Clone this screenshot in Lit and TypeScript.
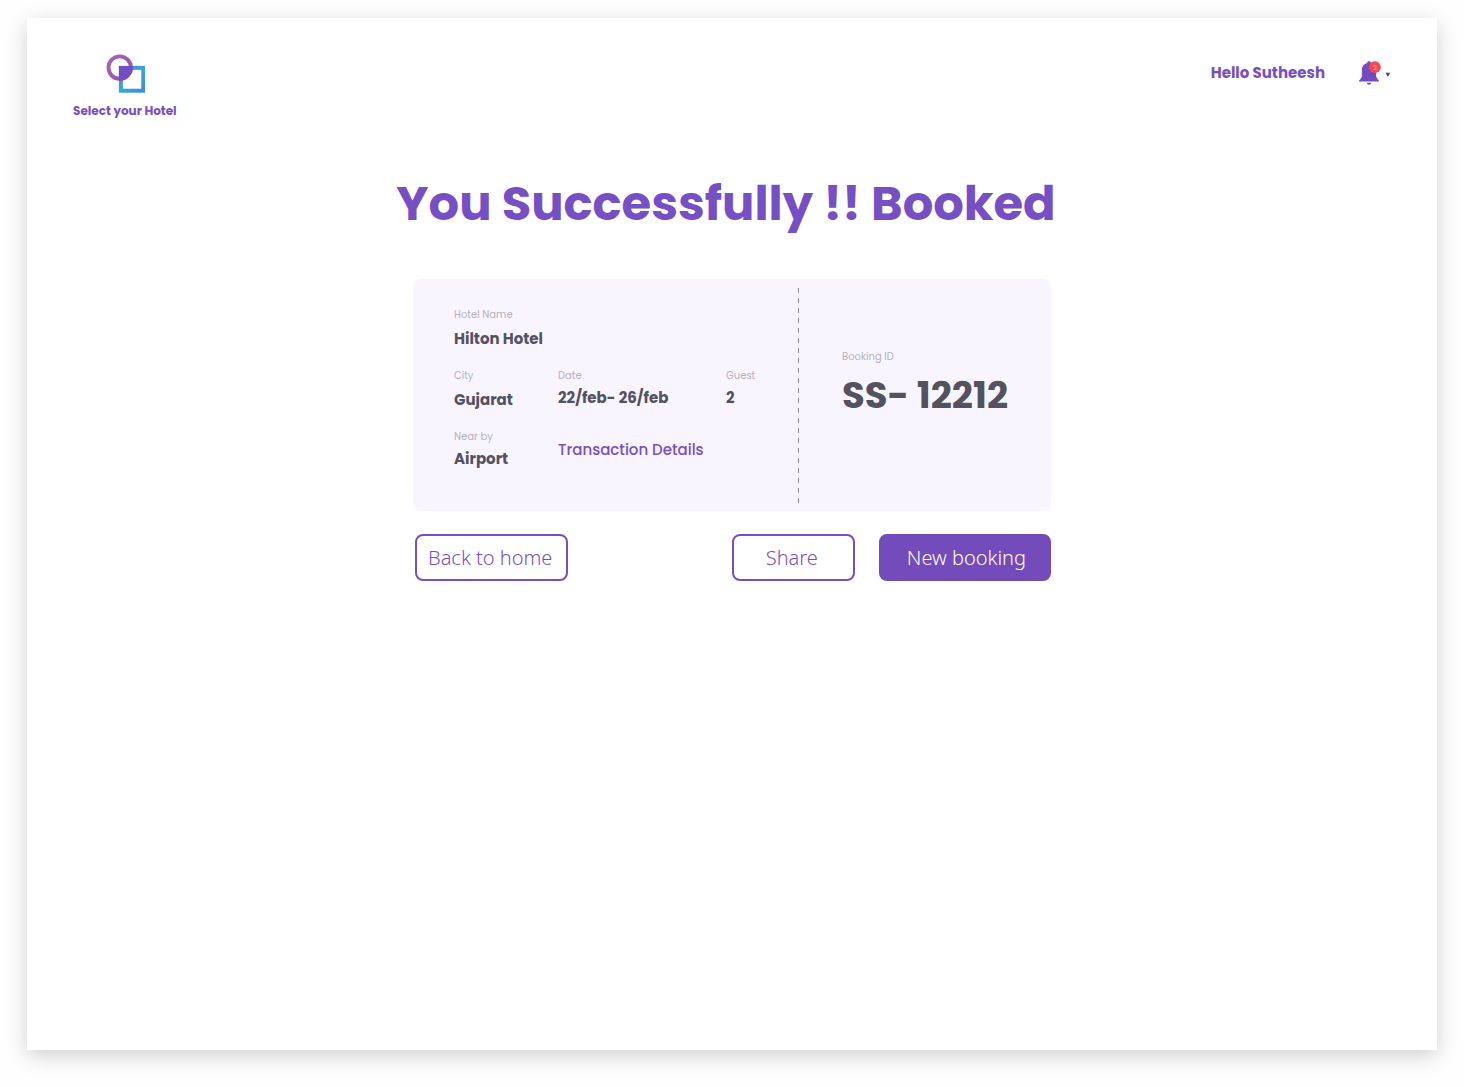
import { LitElement, html, css, svg } from "lit";
import { customElement } from "lit/decorators.js";

interface Field {
  label: string;
  value: string;
  roomy?: boolean;
}

const logo = svg`
  <svg class="logo-mark" viewBox="-1 0 40 40" width="40" height="40" aria-hidden="true">
    <defs>
      <linearGradient id="ring" x1="0" y1="0" x2="1" y2="1">
        <stop offset="0" stop-color="#a765b5" />
        <stop offset="1" stop-color="#8f52b4" />
      </linearGradient>
      <linearGradient id="box" x1="0" y1="0" x2="1" y2="1">
        <stop offset="0" stop-color="#3f8fd0" />
        <stop offset="0.5" stop-color="#39a6dc" />
        <stop offset="1" stop-color="#3a8fd0" />
      </linearGradient>
    </defs>
    <rect x="14.9" y="13.9" width="22.4" height="22.8" fill="none" stroke="url(#box)" stroke-width="4" />
    <circle cx="13.7" cy="13.6" r="11.2" fill="none" stroke="url(#ring)" stroke-width="3.9" />
    <path d="M12.9 11.9H26.8A13.1 13.1 0 0 1 12.9 26.7Z" fill="#754dc2" />
  </svg>`;

const bell = svg`
  <svg class="bell" viewBox="0 0 34 26" width="34" height="26" aria-hidden="true">
    <path d="M10 1.2C11.1 1.2 11.8 1.9 11.9 2.9C15.2 3.7 17.1 6.4 17.1 10V15.2C17.1 17.3 18 18.8 19.9 20.6V21.4H.1V20.6C2 18.8 2.9 17.3 2.9 15.2V10C2.9 6.4 4.8 3.7 8.1 2.9C8.2 1.9 8.9 1.2 10 1.2Z" fill="#734bbd" />
    <path d="M7.8 22.8H12.2C12 24 11.3 24.8 10 24.8S8 24 7.8 22.8Z" fill="#734bbd" />
    <circle cx="15.9" cy="7.1" r="5.9" fill="#fb4650" />
    <text x="15.9" y="9.6" text-anchor="middle" font-size="7" fill="#ffc9cc">2</text>
    <path d="M26.6 12.8H31.2L28.9 17Z" fill="#4c4c50" />
  </svg>`;

@customElement("app-root")
export class AppRoot extends LitElement {
  static styles = css`
    :host {
      display: block;
      --brand: #774fc4;
      --ink: #54525f;
      --muted: #b5b2bd;
      font-family: Poppins, Inter, "Liberation Sans", sans-serif;
      color: var(--ink);
    }
    * {
      box-sizing: border-box;
    }
    .page {
      display: flex;
      min-height: 100vh;
      padding: 18px 27px 37px;
      background: #fefefe;
    }
    .sheet {
      flex: 1;
      background: #fff;
      box-shadow: 0 6px 20px rgba(0, 0, 0, 0.18);
    }
    .header {
      display: flex;
      justify-content: space-between;
      align-items: flex-start;
      padding: 36px 44px 0 46px;
    }
    .brand {
      display: flex;
      flex-direction: column;
      align-items: center;
      gap: 8px;
      color: var(--brand);
      font-size: 12px;
      line-height: 18px;
      font-weight: 700;
      text-decoration: none;
    }
    .account {
      display: flex;
      align-items: center;
      gap: 34px;
      padding-top: 5px;
    }
    .hello {
      color: var(--brand);
      font-size: 15px;
      line-height: 28px;
      font-weight: 700;
    }
    .notify {
      display: flex;
      padding: 0;
      border: 0;
      background: none;
      font-family: inherit;
      cursor: pointer;
    }
    .main {
      max-width: 662px;
      margin: 0 auto;
      padding: 50px 12px 0;
    }
    .title {
      display: flex;
      justify-content: center;
      margin: 0 -12px;
      padding-right: 12px;
      color: var(--brand);
      font-size: 48px;
      line-height: 68px;
      font-weight: 700;
      white-space: nowrap;
    }
    .ticket {
      display: flex;
      margin-top: 41px;
      border-radius: 8px;
      background: #f8f5ff;
    }
    .details {
      flex: 1;
      display: grid;
      grid-template-columns: 104px 168px 1fr;
      row-gap: 17px;
      align-items: start;
      margin: 0;
      padding: 28px 0 40px 41px;
    }
    .field {
      display: flex;
      flex-direction: column;
      gap: 2px;
      white-space: nowrap;
    }
    .roomy {
      gap: 4px;
    }
    .wide {
      grid-column: 1 / -1;
    }
    .label {
      color: var(--muted);
      font-size: 10px;
      line-height: 16px;
    }
    .value {
      margin: 0;
      font-size: 15px;
      line-height: 24px;
      font-weight: 700;
    }
    .link {
      grid-column: 2 / -1;
      align-self: center;
      color: var(--brand);
      font-size: 15px;
      line-height: 24px;
      font-weight: 500;
      text-decoration: none;
    }
    .tear {
      width: 1px;
      margin: 9px 0 6px;
      background: repeating-linear-gradient(#8f8c9b 0 5px, transparent 5px 10px);
    }
    .stub {
      width: 252px;
      margin: 0;
      padding: 70px 0 0 43px;
      white-space: nowrap;
    }
    .code {
      margin: 0;
      font-size: 37px;
      line-height: 60px;
      font-weight: 700;
    }
    .actions {
      display: flex;
      align-items: center;
      gap: 24px;
      margin: 23px 0 0 2px;
    }
    .btn {
      height: 47px;
      padding: 0 14px 0 11px;
      border: 2px solid var(--brand);
      border-radius: 8px;
      background: #fff;
      color: var(--brand);
      font-family: "Noto Sans", "Open Sans", sans-serif;
      font-size: 20px;
      line-height: 28px;
      font-weight: 300;
      cursor: pointer;
    }
    .home {
      margin-right: auto;
    }
    .share {
      padding: 0 35px 0 32px;
    }
    .primary {
      padding: 0 23px 0 26px;
      background: #734bbb;
      border-color: #734bbb;
      color: #fff;
    }
  `;

  private field({ label, value, roomy }: Field, wide = false) {
    return html`<div class="field ${roomy ? "roomy" : ""} ${wide ? "wide" : ""}">
      <dt class="label">${label}</dt>
      <dd class="value">${value}</dd>
    </div>`;
  }

  render() {
    return html`
      <div class="page">
        <div class="sheet">
          <header class="header">
            <a class="brand" href="#">${logo}<span>Select your Hotel</span></a>
            <div class="account">
              <span class="hello">Hello Sutheesh</span>
              <button class="notify" type="button" aria-label="Notifications">${bell}</button>
            </div>
          </header>
          <main class="main">
            <h1 class="title">You Successfully !! Booked</h1>
            <section class="ticket">
              <dl class="details">
                ${this.field({ label: "Hotel Name", value: "Hilton Hotel", roomy: true }, true)}
                ${this.field({ label: "City", value: "Gujarat", roomy: true })}
                ${this.field({ label: "Date", value: "22/feb- 26/feb" })}
                ${this.field({ label: "Guest", value: "2" })}
                ${this.field({ label: "Near by", value: "Airport" })}
                <a class="link" href="#">Transaction Details</a>
              </dl>
              <div class="tear"></div>
              <dl class="stub">
                <dt class="label">Booking ID</dt>
                <dd class="code">SS- 12212</dd>
              </dl>
            </section>
            <div class="actions">
              <button class="btn home" type="button">Back to home</button>
              <button class="btn share" type="button">Share</button>
              <button class="btn primary" type="button">New booking</button>
            </div>
          </main>
        </div>
      </div>
    `;
  }
}
